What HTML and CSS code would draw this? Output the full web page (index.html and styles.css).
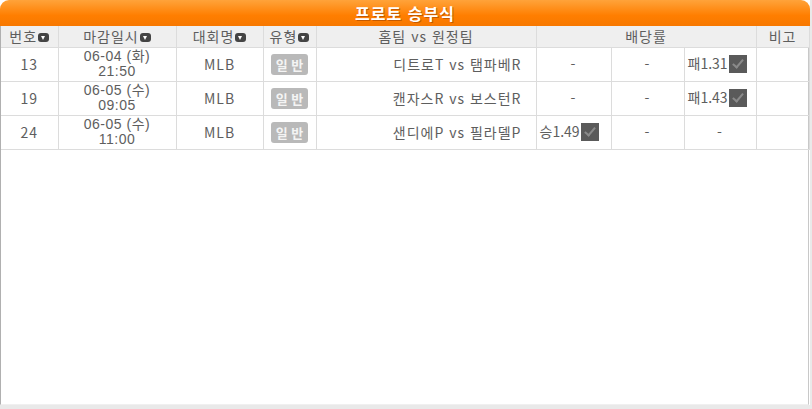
FILE: index.html
```html
<!DOCTYPE html>
<html lang="ko">
<head>
    <meta charset="UTF-8">
    <title>프로토 승부식</title>
    <link rel="stylesheet" href="styles.css">
</head>
<body>
    <div class="frame">
        <div class="title-bar">프로토 승부식</div>
        <div class="board">
            <table class="game-table">
                <colgroup>
                    <col style="width:57px">
                    <col style="width:118px">
                    <col style="width:87px">
                    <col style="width:53px">
                    <col style="width:220px">
                    <col style="width:75px">
                    <col style="width:73px">
                    <col style="width:72px">
                    <col style="width:53px">
                </colgroup>
                <tr class="head">
                    <th>번호<span class="sort"></span></th>
                    <th>마감일시<span class="sort"></span></th>
                    <th>대회명<span class="sort"></span></th>
                    <th>유형<span class="sort"></span></th>
                    <th>홈팀 vs 원정팀</th>
                    <th colspan="3">배당률</th>
                    <th>비고</th>
                </tr>
                <tr>
                    <td>13</td>
                    <td class="date"><span>06-04 (화)</span><span>21:50</span></td>
                    <td>MLB</td>
                    <td><span class="badge">일 반</span></td>
                    <td class="teams">디트로T vs 탬파베R</td>
                    <td>-</td>
                    <td>-</td>
                    <td class="pick">패1.31<span class="check"></span></td>
                    <td></td>
                </tr>
                <tr>
                    <td>19</td>
                    <td class="date"><span>06-05 (수)</span><span>09:05</span></td>
                    <td>MLB</td>
                    <td><span class="badge">일 반</span></td>
                    <td class="teams">캔자스R vs 보스턴R</td>
                    <td>-</td>
                    <td>-</td>
                    <td class="pick">패1.43<span class="check"></span></td>
                    <td></td>
                </tr>
                <tr>
                    <td>24</td>
                    <td class="date"><span>06-05 (수)</span><span>11:00</span></td>
                    <td>MLB</td>
                    <td><span class="badge">일 반</span></td>
                    <td class="teams">샌디에P vs 필라델P</td>
                    <td class="pick">승1.49<span class="check"></span></td>
                    <td>-</td>
                    <td>-</td>
                    <td></td>
                </tr>
            </table>
        </div>
    </div>
</body>
</html>
```

FILE: styles.css
```css
* {
    box-sizing: border-box;
    margin: 0;
    padding: 0;
}

body {
    width: 812px;
    height: 409px;
    background-color: #e9e9e9;
    font-family: "Noto Sans CJK KR", "DejaVu Sans", sans-serif;
    font-size: 14px;
    letter-spacing: 1px;
    color: #5e5e5e;
    overflow: hidden;
}

.frame {
    width: 810px;
    height: 405px;
    background-color: #fff;
    display: flex;
    flex-direction: column;
}

.title-bar {
    height: 26px;
    background: linear-gradient(#ffa33a, #ff7e00 60%, #f77800);
    border-radius: 9px 9px 0 0;
    color: #fff;
    font-weight: bold;
    font-size: 16px;
    line-height: 26px;
    text-align: center;
    text-shadow: 1px 1px 0 #c45a00;
}

.board {
    flex: 1;
    border-left: 1px solid #b0b0b0;
    border-right: 1px solid #c8c8c8;
    border-bottom: 1px solid #f0f0f0;
    width: 809px;
}

.game-table {
    border-collapse: collapse;
    table-layout: fixed;
    width: 808px;
}

.game-table th,
.game-table td {
    border: 1px solid #dcdcdc;
    text-align: center;
    white-space: nowrap;
    overflow: hidden;
}

.game-table tr > :first-child {
    border-left: none;
}

.game-table .head th {
    height: 21px;
    background-color: #efefef;
    font-weight: normal;
    font-size: 14px;
    line-height: 18px;
    color: #5e5e5e;
    border-top: none;
}

.game-table td {
    height: 34px;
    line-height: 16px;
}

.sort {
    display: inline-block;
    width: 11px;
    height: 9px;
    margin-left: 1px;
    background-color: #444;
    border-radius: 3px;
    position: relative;
    vertical-align: 0;
}

.sort::after {
    content: "";
    position: absolute;
    left: 3px;
    top: 3px;
    border-left: 2.5px solid transparent;
    border-right: 2.5px solid transparent;
    border-top: 4px solid #fff;
}

.game-table td.date span {
    display: block;
    font-family: "Liberation Sans", "Noto Sans CJK KR", sans-serif;
    font-size: 14px;
    line-height: 15px;
    letter-spacing: 0.5px;
}

.badge {
    display: inline-block;
    width: 37px;
    height: 21px;
    line-height: 21px;
    border-radius: 3px;
    background-color: #b9b9b9;
    color: #f4f4f4;
    font-weight: bold;
    font-size: 13px;
    letter-spacing: 0;
}

.game-table td.teams {
    text-align: right;
    padding-right: 14px;
}

.game-table td.pick {
    text-align: left;
    padding-left: 3px;
    letter-spacing: 0;
}

.check {
    display: inline-block;
    width: 18px;
    height: 18px;
    margin-left: 1px;
    vertical-align: -4px;
    background-color: #5a5a5a;
    position: relative;
}

.check::after {
    content: "";
    position: absolute;
    left: 6px;
    top: 2px;
    width: 4px;
    height: 9px;
    border-right: 2px solid #8a8a8a;
    border-bottom: 2px solid #8a8a8a;
    transform: rotate(40deg);
}
```
